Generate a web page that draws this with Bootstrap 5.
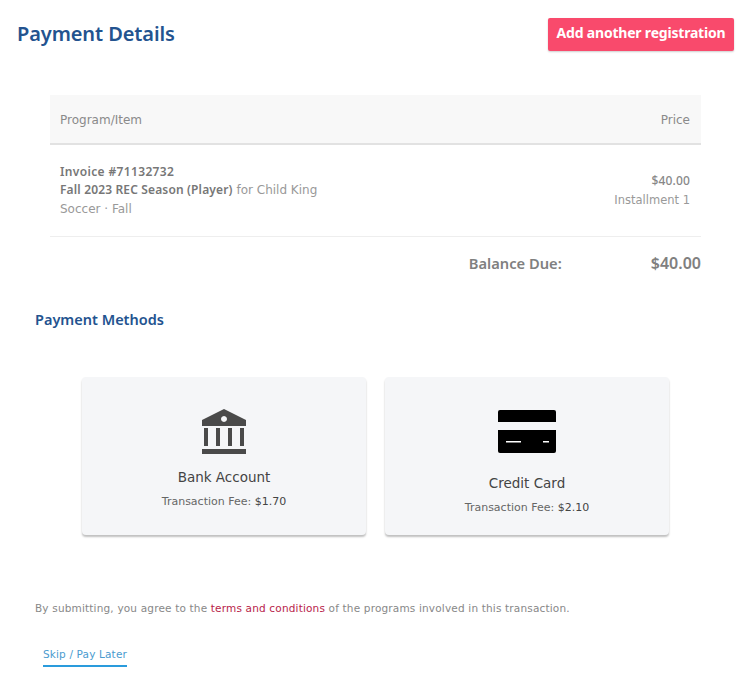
<!DOCTYPE html>
<html lang="en">
<head>
  <meta charset="UTF-8">
  <meta name="viewport" content="width=device-width, initial-scale=1.0">
  <title>Payment Details</title>
  <link href="https://cdn.jsdelivr.net/npm/bootstrap@5.3.0/dist/css/bootstrap.min.css" rel="stylesheet">
  <style>
    body {
      background-color: #fff;
      color: #555;
      font-family: "DejaVu Sans", sans-serif;
      font-size: 12px;
    }
    .page-wrap {
      height: 685px;
      padding: 18px 16px 0 17px;
      overflow: hidden;
    }
    .page-title {
      color: #23538f;
      font-family: "Noto Sans", sans-serif;
      font-size: 20px;
      font-weight: 600;
      margin: 0;
      line-height: 32px;
      letter-spacing: -.1px;
    }
    .btn-add {
      background-color: #f94a6c;
      color: #fff;
      font-family: "Noto Sans", sans-serif;
      font-size: 14px;
      font-weight: 700;
      width: 186px;
      height: 33px;
      padding: 0 0 4px;
      border: 0;
      border-radius: 2px;
      letter-spacing: -0.2px;
      box-shadow: 0 1px 2px rgba(0, 0, 0, .2);
    }
    .items-wrap {
      margin: 44px 33px 0 33px;
    }
    .items-head {
      background-color: #f8f8f8;
      border-bottom: 2px solid #e2e2e2;
      height: 50px;
      padding: 2px 11px 0 10px;
      color: #8a8a8a;
    }
    .items-row {
      border-bottom: 1px solid #eee;
      height: 92px;
      padding: 0 11px 0 10px;
      line-height: 18.5px;
      color: #999;
    }
    .items-row b {
      color: #777;
      font-family: "Noto Sans", sans-serif;
      font-size: 12px;
      font-weight: 600;
      letter-spacing: .15px;
    }
    .items-row .invoice-no {
      letter-spacing: .35px;
    }
    .items-row .price-amount {
      color: #888;
      font-weight: 500;
    }
    .price-note {
      font-size: 11.5px;
    }
    .balance-row {
      margin-top: 15px;
      color: #808080;
      font-family: "Noto Sans", sans-serif;
      font-size: 16px;
      font-weight: 600;
      line-height: 22px;
    }
    .balance-label {
      width: 182px;
      font-size: 14.7px;
    }
    .section-title {
      color: #23538f;
      font-family: "Noto Sans", sans-serif;
      font-size: 14.5px;
      font-weight: 600;
      margin: 35px 0 0 18px;
      line-height: 20px;
    }
    .methods {
      margin: 48px 0 0 65px;
      gap: 19px;
    }
    .method-tile {
      background-color: #f5f6f8;
      width: 284px;
      height: 158px;
      padding-top: 32px;
      border-radius: 4px;
      box-shadow: 0 2px 2px rgba(0, 0, 0, .25);
      text-align: center;
      color: #444;
    }
    .icon-bank {
      margin-bottom: 13px;
    }
    .icon-card {
      margin-top: 1px;
      margin-bottom: 19px;
    }
    .method-name {
      font-size: 13.5px;
      line-height: 20px;
    }
    .method-fee {
      color: #666;
      font-size: 11px;
      line-height: 16px;
      margin-top: 7px;
    }
    .method-fee b {
      color: #444;
      font-weight: 500;
    }
    .terms-text {
      margin: 65px 0 0 18px;
      font-size: 10.5px;
      letter-spacing: .17px;
      color: #888;
      line-height: 16px;
    }
    .terms-text a {
      color: #b8234a;
      text-decoration: none;
    }
    .skip-link {
      display: inline-block;
      margin: 30px 0 0 26px;
      font-size: 10.5px;
      letter-spacing: .15px;
      line-height: 16px;
      padding-bottom: 3px;
      color: #4a9bcf;
      border-bottom: 2px solid #2a9bdc;
      text-decoration: none;
    }
  </style>
</head>
<body>
  <div class="page-wrap">
    <div class="d-flex justify-content-between align-items-start">
      <h1 class="page-title">Payment Details</h1>
      <button type="button" class="btn btn-add">Add another registration</button>
    </div>

    <div class="items-wrap">
      <div class="items-head d-flex justify-content-between align-items-center">
        <span>Program/Item</span>
        <span>Price</span>
      </div>
      <div class="items-row d-flex justify-content-between align-items-center">
        <div>
          <b class="invoice-no">Invoice #71132732</b><br>
          <b>Fall 2023 REC Season (Player)</b> for Child King<br>
          Soccer &middot; Fall
        </div>
        <div class="text-end">
          <b class="price-amount">$40.00</b><br>
          <span class="price-note">Installment 1</span>
        </div>
      </div>
      <div class="balance-row d-flex justify-content-end">
        <span class="balance-label">Balance Due:</span>
        <span>$40.00</span>
      </div>
    </div>

    <h2 class="section-title">Payment Methods</h2>

    <div class="methods d-flex">
      <div class="method-tile d-flex flex-column align-items-center">
        <svg class="icon-bank" width="46" height="45" viewBox="0 0 46 45" fill="#4a4a4a">
          <path fill-rule="evenodd" d="M23 0 L45 11 V17 H1 V11 Z M23 7 a3 3 0 1 0 .01 0 Z"/>
          <rect x="3" y="19" width="4" height="18"/>
          <rect x="15" y="19" width="4" height="18"/>
          <rect x="27" y="19" width="4" height="18"/>
          <rect x="39" y="19" width="4" height="18"/>
          <rect x="1" y="40" width="44" height="5"/>
        </svg>
        <div class="method-name">Bank Account</div>
        <div class="method-fee">Transaction Fee: <b>$1.70</b></div>
      </div>
      <div class="method-tile d-flex flex-column align-items-center">
        <svg class="icon-card" width="58" height="44" viewBox="0 0 58 44">
          <path d="M2 0 H56 a2 2 0 0 1 2 2 V12 H0 V2 a2 2 0 0 1 2 -2 Z" fill="#000"/>
          <path d="M0 20 H58 V41 a2 2 0 0 1 -2 2 H2 a2 2 0 0 1 -2 -2 Z" fill="#000"/>
          <rect x="8" y="31" width="15" height="1.5" fill="#fff"/>
          <rect x="45" y="31" width="6" height="1.5" fill="#fff"/>
        </svg>
        <div class="method-name">Credit Card</div>
        <div class="method-fee">Transaction Fee: <b>$2.10</b></div>
      </div>
    </div>

    <p class="terms-text mb-0">By submitting, you agree to the <a href="#">terms and conditions</a> of the programs involved in this transaction.</p>
    <a class="skip-link" href="#">Skip / Pay Later</a>
  </div>
  <script src="https://cdn.jsdelivr.net/npm/bootstrap@5.3.0/dist/js/bootstrap.bundle.min.js"></script>
</body>
</html>
